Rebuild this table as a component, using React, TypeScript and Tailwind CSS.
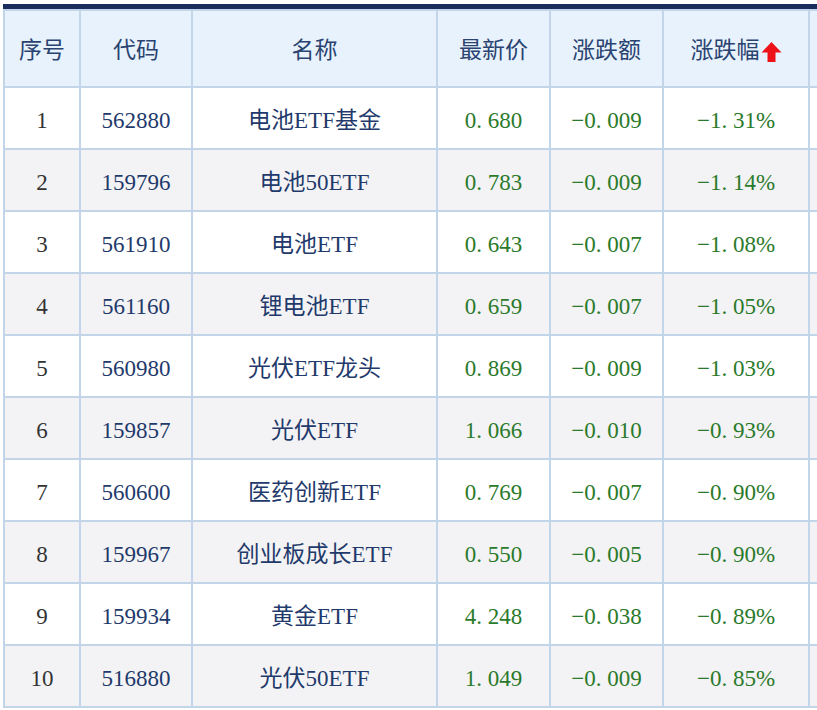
import React from "react";

type Row = { no: number; code: string; name: string; price: string; chg: string; pct: string };

const rows: Row[] = [
  { no: 1, code: "562880", name: "电池ETF基金", price: "0.680", chg: "-0.009", pct: "-1.31%" },
  { no: 2, code: "159796", name: "电池50ETF", price: "0.783", chg: "-0.009", pct: "-1.14%" },
  { no: 3, code: "561910", name: "电池ETF", price: "0.643", chg: "-0.007", pct: "-1.08%" },
  { no: 4, code: "561160", name: "锂电池ETF", price: "0.659", chg: "-0.007", pct: "-1.05%" },
  { no: 5, code: "560980", name: "光伏ETF龙头", price: "0.869", chg: "-0.009", pct: "-1.03%" },
  { no: 6, code: "159857", name: "光伏ETF", price: "1.066", chg: "-0.010", pct: "-0.93%" },
  { no: 7, code: "560600", name: "医药创新ETF", price: "0.769", chg: "-0.007", pct: "-0.90%" },
  { no: 8, code: "159967", name: "创业板成长ETF", price: "0.550", chg: "-0.005", pct: "-0.90%" },
  { no: 9, code: "159934", name: "黄金ETF", price: "4.248", chg: "-0.038", pct: "-0.89%" },
  { no: 10, code: "516880", name: "光伏50ETF", price: "1.049", chg: "-0.009", pct: "-0.85%" },
];

const FONT = { fontFamily: '"Liberation Serif", "Noto Sans CJK SC", serif' };

function Num({ v }: { v: string }) {
  const parts = v.replace("-", "\u2212").split(".");
  return (
    <span className="whitespace-nowrap">
      {parts[0]}
      <span className="inline-block w-[0.5em] text-left">.</span>
      {parts[1]}
    </span>
  );
}

function UpArrow() {
  return (
    <svg width="21" height="22" viewBox="0 0 21 22" className="inline-block ml-[1px]">
      <path d="M10.5 1 L20.5 11.5 L14.5 11.5 L14.5 21 L6.5 21 L6.5 11.5 L0.5 11.5 Z" fill="#ec1218" />
    </svg>
  );
}

const cols = "grid grid-cols-[74px_110px_243px_111px_111px_144px_1fr]";

export default function App() {
  return (
    <div className="relative w-[817px] h-[710px] overflow-hidden bg-white pt-[4px] pl-[3px]" style={FONT}>
      <div className="h-[5px] bg-[#1b2d5c]" />
      <div className={`${cols} gap-[2px] bg-[#c3d6e9] py-[2px] pl-[2px] text-[23px]`}>
        {["序号", "代码", "名称", "最新价", "涨跌额"].map((h) => (
          <div key={h} className="h-[75px] pt-[6px] bg-[#e7f2fd] flex items-center justify-center text-[#2a4370]">
            {h}
          </div>
        ))}
        <div className="h-[75px] pt-[6px] bg-[#e7f2fd] flex items-center justify-center text-[#2a4370]">
          <span>涨跌幅</span>
          <UpArrow />
        </div>
        <div className="h-[75px] bg-[#e7f2fd]" />
        {rows.map((r) => {
          const bg = r.no % 2 === 0 ? "bg-[#f3f3f5]" : "bg-white";
          const cell = `h-[60px] pt-[7px] ${bg} flex items-center justify-center`;
          return (
            <React.Fragment key={r.no}>
              <div className={`${cell} text-[#333333]`}>{r.no}</div>
              <div className={`${cell} text-[#1f3a6b]`}>{r.code}</div>
              <div className={`${cell} text-[#1f3a6b]`}>{r.name}</div>
              <div className={`${cell} text-[#2b7a2b]`}><Num v={r.price} /></div>
              <div className={`${cell} text-[#2b7a2b]`}><Num v={r.chg} /></div>
              <div className={`${cell} text-[#2b7a2b]`}><Num v={r.pct} /></div>
              <div className={cell} />
            </React.Fragment>
          );
        })}
      </div>
    </div>
  );
}
